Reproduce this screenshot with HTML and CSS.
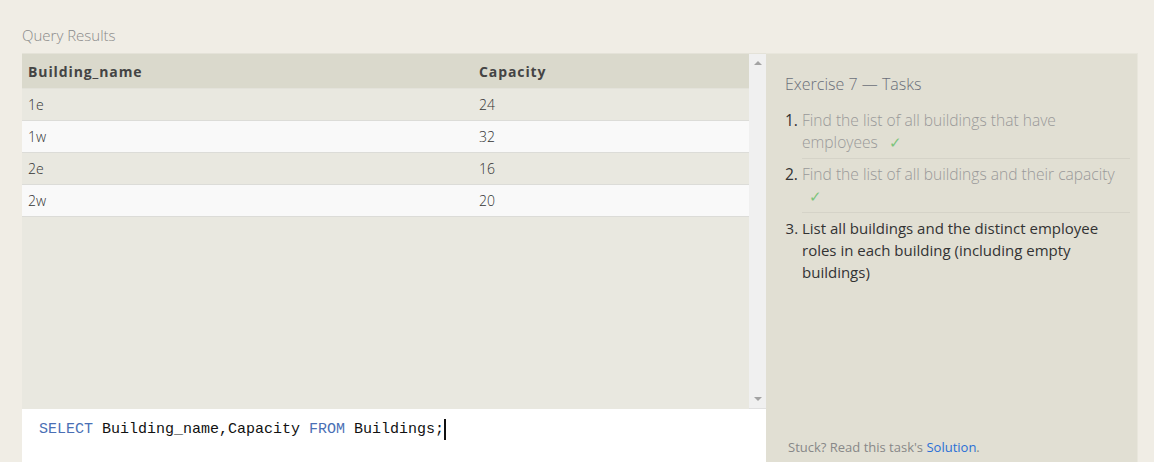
FILE: index.html
```html
<!DOCTYPE html>
<html>
<head>
<meta charset="utf-8">
<link rel="stylesheet" href="styles.css">
</head>
<body>
<div class="page">
  <h2 class="section-title">Query Results</h2>
  <div class="workspace">
    <div class="left">
      <div class="results">
        <div class="table-wrap">
          <table class="results-table">
            <thead>
              <tr><th class="col-name">Building_name</th><th>Capacity</th></tr>
            </thead>
            <tbody>
              <tr><td>1e</td><td>24</td></tr>
              <tr><td>1w</td><td>32</td></tr>
              <tr><td>2e</td><td>16</td></tr>
              <tr><td>2w</td><td>20</td></tr>
            </tbody>
          </table>
        </div>
        <div class="scrollbar">
          <span class="arrow up"></span>
          <span class="arrow down"></span>
        </div>
      </div>
      <div class="editor"><span class="kw">SELECT</span> Building_name,Capacity <span class="kw">FROM</span> Buildings;<span class="cursor"></span></div>
    </div>
    <div class="tasks">
      <h3 class="tasks-title">Exercise 7 — Tasks</h3>
      <ol class="task-list">
        <li class="done">Find the list of all buildings that have employees <span class="check">✓</span></li>
        <li class="done">Find the list of all buildings and their capacity <span class="check">✓</span></li>
        <li class="current">List all buildings and the distinct employee roles in each building (including empty buildings)</li>
      </ol>
      <p class="stuck">Stuck? Read this task's <a href="#" class="solution">Solution</a>.</p>
    </div>
  </div>
</div>
</body>
</html>
```

FILE: styles.css
```css
html, body {
  margin: 0;
  padding: 0;
  background: #f0ede5;
  overflow: hidden;
}

.page {
  padding: 25px 16px 0 22px;
  font-family: "Open Sans", "Noto Sans", sans-serif;
}

.section-title {
  margin: 0 0 8px 0;
  font-size: 15px;
  line-height: 20px;
  font-weight: 300;
  color: #8a8a8a;
}

.workspace {
  display: flex;
  height: 409px;
}

.left {
  width: 744px;
  display: flex;
  flex-direction: column;
  border-top: 1px solid #e4e2d8;
}

.results {
  flex: 1;
  display: flex;
  background: #e9e8e0;
}

.table-wrap {
  flex: 1;
}

.results-table {
  width: 100%;
  border-collapse: collapse;
  font-size: 14px;
}

.results-table th {
  height: 34px;
  padding: 0 6px;
  text-align: left;
  font-weight: 700;
  color: #444;
  background: #dad9cc;
  letter-spacing: 0.9px;
}

.results-table .col-name {
  width: 439px;
}

.results-table td {
  height: 31px;
  padding: 0 6px;
  font-weight: 300;
  color: #333;
  border-bottom: 1px solid #dcdcd8;
}

.results-table thead tr {
  border-bottom: 1px solid #e3e2da;
}

.results-table tbody tr:nth-child(odd) td {
  background: #e9e8e0;
}

.results-table tbody tr:nth-child(even) td {
  background: #f9f9f9;
}

.scrollbar {
  width: 17px;
  background: #f0f0f0;
  display: flex;
  flex-direction: column;
  justify-content: space-between;
  align-items: center;
  padding: 7px 0 7px;
  border-bottom: 1px solid #e0e0e0;
}

.arrow {
  width: 0;
  height: 0;
  border-left: 4px solid transparent;
  border-right: 4px solid transparent;
}

.arrow.up {
  border-bottom: 4px solid #a3a3a3;
}

.arrow.down {
  border-top: 4px solid #a3a3a3;
}

.editor {
  height: 53px;
  background: #ffffff;
  box-sizing: border-box;
  padding: 11px 0 0 17px;
  font-family: "Liberation Mono", "DejaVu Sans Mono", monospace;
  font-size: 15px;
  line-height: 20px;
  color: #111;
  white-space: nowrap;
}

.kw {
  color: #4a6fb5;
}

.cursor {
  display: inline-block;
  width: 2px;
  height: 21px;
  background: #111;
  vertical-align: top;
  margin-top: -1px;
}

.tasks {
  width: 372px;
  box-sizing: border-box;
  background: #e1dfd3;
  border-top: 1px solid #e8e6dc;
  border-right: 1px solid #e8e6dc;
  padding: 18px 7px 6px 19px;
  display: flex;
  flex-direction: column;
}

.tasks-title {
  margin: 0 0 9px 0;
  font-size: 16px;
  line-height: 24px;
  font-weight: 300;
  color: #6b6f7a;
}

.task-list {
  margin: 0;
  padding: 0 0 0 17px;
  list-style: decimal;
  font-size: 15.6px;
  line-height: 22px;
  font-weight: 300;
}

.task-list li {
  padding: 4px 0 5px;
  border-bottom: 1px solid #d5d3c8;
}

.task-list li:last-child {
  border-bottom: none;
}

.task-list li::marker {
  color: #333;
  font-weight: 400;
}

.task-list li.done {
  color: #999;
}

.task-list li.current {
  color: #333;
  font-weight: 400;
  font-size: 15px;
}

.check {
  color: #7cc47c;
  margin-left: 7px;
  font-family: "DejaVu Sans", sans-serif;
  font-size: 15px;
  line-height: 1;
}

.stuck {
  margin: auto 0 0 3px;
  font-size: 13px;
  line-height: 18px;
  color: #888;
}

.solution {
  color: #2a6fd6;
  text-decoration: none;
}
```
